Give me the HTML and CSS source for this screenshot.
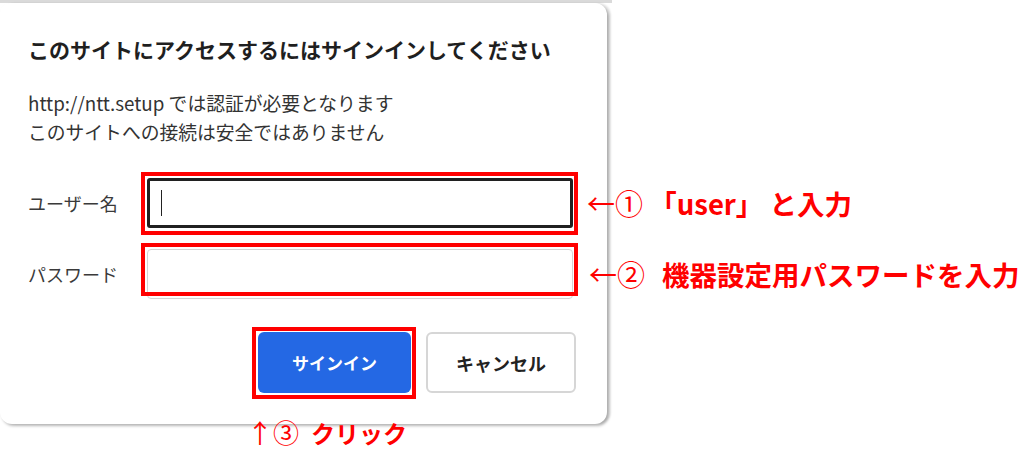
FILE: index.html
```html
<!DOCTYPE html>
<html lang="ja">
<head>
<meta charset="utf-8">
<title>サインイン</title>
<link rel="stylesheet" href="styles.css">
</head>
<body>
<div class="topbar"></div>
<div class="dialog">
  <h1 class="title">このサイトにアクセスするにはサインインしてください</h1>
  <div class="msg">
    <p>http://ntt.setup では認証が必要となります</p>
    <p>このサイトへの接続は安全ではありません</p>
  </div>
  <div class="form">
    <label class="label">ユーザー名</label>
    <div class="field focused">
      <span class="caret"></span>
      <span class="hl hl-field"></span>
      <div class="note note-field"><span class="thin">←①</span> 「user」 と入力</div>
    </div>
    <label class="label">パスワード</label>
    <div class="field">
      <span class="hl hl-field2"></span>
      <div class="note note-field"><span class="thin">←②</span><span class="gap">機器設定用パスワードを入力</span></div>
    </div>
  </div>
  <div class="actions">
    <div class="btn primary">サインイン
      <span class="hl hl-btn"></span>
      <div class="note note-btn"><span class="thin">↑③</span><span class="gap-s">クリック</span></div>
    </div>
    <div class="btn secondary">キャンセル</div>
  </div>
</div>
</body>
</html>
```
FILE: styles.css
```css
html, body {
  margin: 0;
  padding: 0;
  background: #ffffff;
  font-family: "Noto Sans CJK JP", "Noto Sans", sans-serif;
}
body {
  width: 1031px;
  height: 452px;
  overflow: hidden;
  position: relative;
}
.topbar {
  width: 612px;
  height: 3px;
  background: #dadada;
}
.dialog {
  width: 607px;
  height: 421px;
  box-sizing: border-box;
  padding: 32px 31px 0 28px;
  background: #ffffff;
  border-radius: 10px 12px 12px 12px;
  box-shadow: 2px 2px 3px rgba(0, 0, 0, 0.28), 4px 0 2px rgba(0, 0, 0, 0.08);
  position: relative;
}
.title {
  margin: 0;
  font-size: 21px;
  line-height: 28px;
  font-weight: 700;
  color: #1f1f1f;
}
.msg {
  margin-top: 25px;
  color: #333333;
  font-size: 18.8px;
  line-height: 29px;
}
.msg p {
  margin: 0;
}
.form {
  margin-top: 32px;
  display: grid;
  grid-template-columns: 119px 1fr;
  grid-auto-rows: 50px;
  row-gap: 21px;
  margin-right: 3px;
}
.label {
  display: flex;
  align-items: center;
  font-size: 18px;
  color: #3a3a3a;
}
.field {
  position: relative;
  box-sizing: border-box;
  border: 1px solid #d4d4d4;
  border-radius: 4px;
  background: #fff;
}
.field.focused {
  border: 3px solid #202020;
  border-radius: 3px;
}
.caret {
  position: absolute;
  left: 11px;
  top: 9px;
  width: 1px;
  height: 26px;
  background: #222;
}
.hl {
  position: absolute;
  border: 4px solid #ff0000;
  pointer-events: none;
}
.hl-field {
  left: -9px;
  right: -8px;
  top: -9px;
  bottom: -10px;
}
.hl-field2 {
  left: -7px;
  right: -6px;
  top: -7px;
  bottom: 2px;
}
.note {
  position: absolute;
  white-space: nowrap;
  color: #ff0000;
  font-weight: 700;
  font-size: 27.5px;
  line-height: 30px;
}
.thin {
  font-weight: 400;
  font-size: 28px;
}
.gap {
  margin-left: 17px;
}
.gap-s {
  margin-left: 12px;
}
.note-field {
  left: calc(100% + 17px);
  top: 50%;
  transform: translateY(-50%);
}
.actions {
  margin-top: 33px;
  display: flex;
  justify-content: flex-end;
  gap: 15px;
}
.btn {
  position: relative;
  height: 61px;
  box-sizing: border-box;
  border-radius: 6px;
  display: flex;
  align-items: center;
  justify-content: center;
  font-weight: 700;
  font-size: 17px;
}
.primary {
  width: 153px;
  background: #2468e4;
  color: #ffffff;
}
.secondary {
  width: 150px;
  background: #ffffff;
  color: #222222;
  border: 2px solid #d6d6d6;
  font-size: 18px;
}
.hl-btn {
  left: -6px;
  right: -5px;
  top: -5px;
  bottom: -6px;
}
.note-btn {
  left: -11px;
  top: 85px;
  font-size: 24px;
}
.note-btn .thin {
  font-size: 26px;
}
```
